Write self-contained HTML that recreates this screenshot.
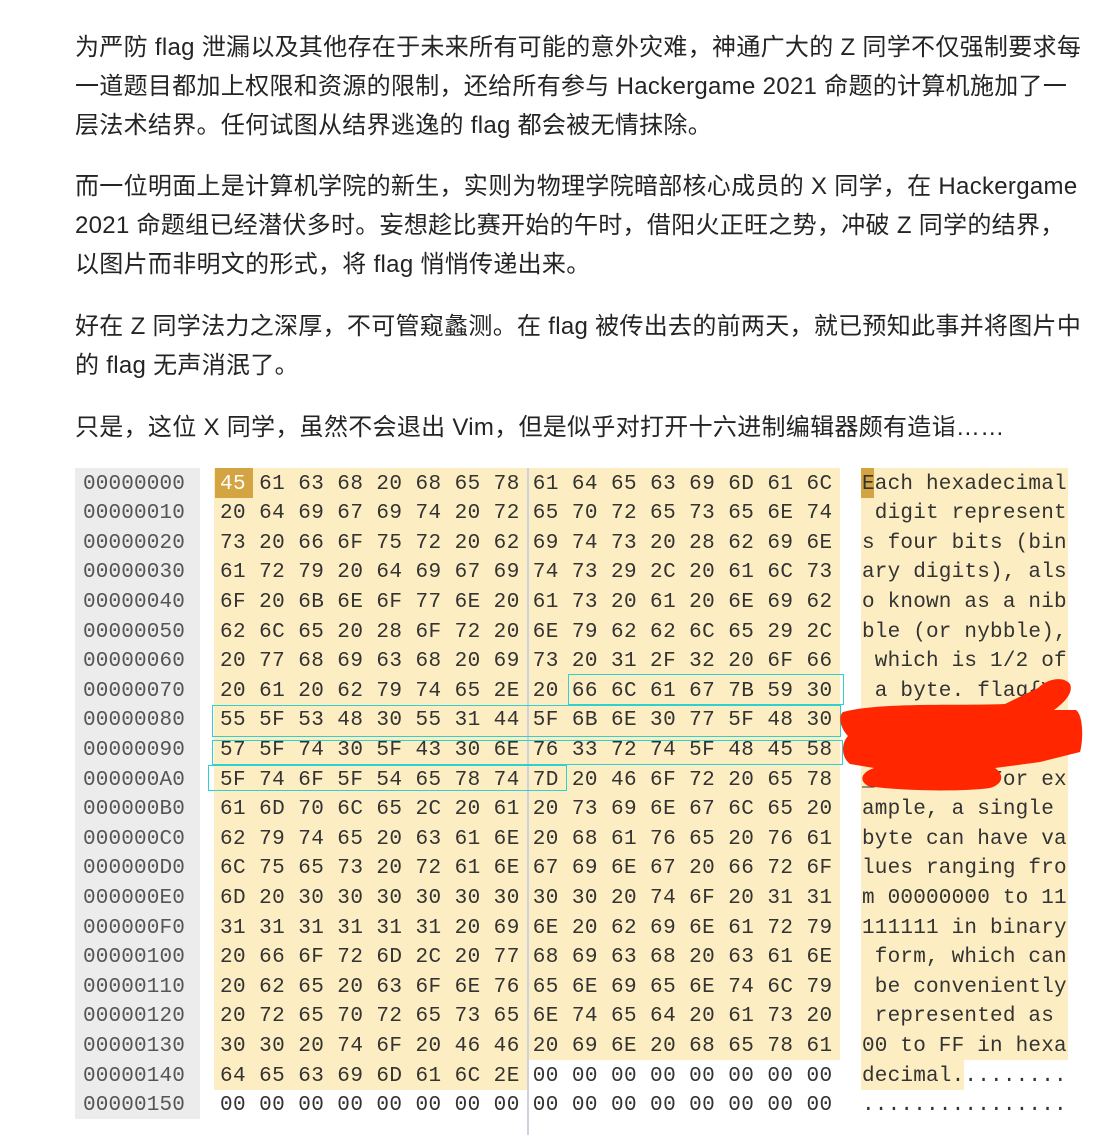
<!DOCTYPE html>
<html><head><meta charset="utf-8"><style>
body{margin:0;width:1108px;height:1135px;background:#fff;position:relative;overflow:hidden}
.p{position:absolute;left:75px;font:24px/39px "Liberation Sans","Noto Sans CJK SC",sans-serif;color:#242424;white-space:nowrap;letter-spacing:.3px}
.bg{position:absolute}
.r{position:absolute;left:0;height:29.6px;line-height:29.6px;font-family:"Liberation Mono",monospace;font-size:21px;white-space:pre;color:#333}
.o{position:absolute;left:83px;letter-spacing:.15px;color:#555}
.h{position:absolute;left:220px;letter-spacing:.43px}
.a{position:absolute;left:862px;letter-spacing:.2px}
.t{position:absolute;border:1.3px solid #2fd0d0}
</style></head><body>
<div class="p" style="top:28px">为严防 flag 泄漏以及其他存在于未来所有可能的意外灾难，神通广大的 Z 同学不仅强制要求每</div>
<div class="p" style="top:67px">一道题目都加上权限和资源的限制，还给所有参与 Hackergame 2021 命题的计算机施加了一</div>
<div class="p" style="top:106px">层法术结界。任何试图从结界逃逸的 flag 都会被无情抹除。</div>
<div class="p" style="top:167px">而一位明面上是计算机学院的新生，实则为物理学院暗部核心成员的 X 同学，在 Hackergame</div>
<div class="p" style="top:206px">2021 命题组已经潜伏多时。妄想趁比赛开始的午时，借阳火正旺之势，冲破 Z 同学的结界，</div>
<div class="p" style="top:245px">以图片而非明文的形式，将 flag 悄悄传递出来。</div>
<div class="p" style="top:307px">好在 Z 同学法力之深厚，不可管窥蠡测。在 flag 被传出去的前两天，就已预知此事并将图片中</div>
<div class="p" style="top:346px">的 flag 无声消泯了。</div>
<div class="p" style="top:408px">只是，这位 X 同学，虽然不会退出 Vim，但是似乎对打开十六进制编辑器颇有造诣……</div>

<div class="bg" style="left:75px;top:468px;width:125px;height:651px;background:#ececec"></div>
<div class="bg" style="left:214px;top:468px;width:626px;height:592px;background:#fdedc2"></div>
<div class="bg" style="left:214px;top:1060px;width:313px;height:29.6px;background:#fdedc2"></div>
<div class="bg" style="left:861px;top:468px;width:207px;height:592px;background:#fdedc2"></div>
<div class="bg" style="left:861px;top:1060px;width:103px;height:29.6px;background:#fdedc2"></div>
<div class="bg" style="left:215px;top:468px;width:38px;height:29.6px;background:#d3a441"></div>
<div class="bg" style="left:861px;top:468px;width:13px;height:29.6px;background:#d3a441"></div>
<div class="bg" style="left:527px;top:468px;width:1.5px;height:667px;background:#cdd3de"></div>

<div style="position:absolute;left:0;top:1.5px;width:1108px">
<div class="r" style="top:468px"><span class="o">00000000</span><span class="h"><span style="color:#fff">45</span> 61 63 68 20 68 65 78 61 64 65 63 69 6D 61 6C</span><span class="a">Each hexadecimal</span></div>
<div class="r" style="top:497.6px"><span class="o">00000010</span><span class="h">20 64 69 67 69 74 20 72 65 70 72 65 73 65 6E 74</span><span class="a"> digit represent</span></div>
<div class="r" style="top:527.2px"><span class="o">00000020</span><span class="h">73 20 66 6F 75 72 20 62 69 74 73 20 28 62 69 6E</span><span class="a">s four bits (bin</span></div>
<div class="r" style="top:556.8px"><span class="o">00000030</span><span class="h">61 72 79 20 64 69 67 69 74 73 29 2C 20 61 6C 73</span><span class="a">ary digits), als</span></div>
<div class="r" style="top:586.4px"><span class="o">00000040</span><span class="h">6F 20 6B 6E 6F 77 6E 20 61 73 20 61 20 6E 69 62</span><span class="a">o known as a nib</span></div>
<div class="r" style="top:616px"><span class="o">00000050</span><span class="h">62 6C 65 20 28 6F 72 20 6E 79 62 62 6C 65 29 2C</span><span class="a">ble (or nybble),</span></div>
<div class="r" style="top:645.6px"><span class="o">00000060</span><span class="h">20 77 68 69 63 68 20 69 73 20 31 2F 32 20 6F 66</span><span class="a"> which is 1/2 of</span></div>
<div class="r" style="top:675.2px"><span class="o">00000070</span><span class="h">20 61 20 62 79 74 65 2E 20 66 6C 61 67 7B 59 30</span><span class="a"> a byte. flag{Y0</span></div>
<div class="r" style="top:704.8px"><span class="o">00000080</span><span class="h">55 5F 53 48 30 55 31 44 5F 6B 6E 30 77 5F 48 30</span><span class="a">U_SH0U1D_kn0w_H0</span></div>
<div class="r" style="top:734.4px"><span class="o">00000090</span><span class="h">57 5F 74 30 5F 43 30 6E 76 33 72 74 5F 48 45 58</span><span class="a">W_t0_C0nv3rt_HEX</span></div>
<div class="r" style="top:764px"><span class="o">000000A0</span><span class="h">5F 74 6F 5F 54 65 78 74 7D 20 46 6F 72 20 65 78</span><span class="a">_to_Text} For ex</span></div>
<div class="r" style="top:793.6px"><span class="o">000000B0</span><span class="h">61 6D 70 6C 65 2C 20 61 20 73 69 6E 67 6C 65 20</span><span class="a">ample, a single </span></div>
<div class="r" style="top:823.2px"><span class="o">000000C0</span><span class="h">62 79 74 65 20 63 61 6E 20 68 61 76 65 20 76 61</span><span class="a">byte can have va</span></div>
<div class="r" style="top:852.8px"><span class="o">000000D0</span><span class="h">6C 75 65 73 20 72 61 6E 67 69 6E 67 20 66 72 6F</span><span class="a">lues ranging fro</span></div>
<div class="r" style="top:882.4px"><span class="o">000000E0</span><span class="h">6D 20 30 30 30 30 30 30 30 30 20 74 6F 20 31 31</span><span class="a">m 00000000 to 11</span></div>
<div class="r" style="top:912px"><span class="o">000000F0</span><span class="h">31 31 31 31 31 31 20 69 6E 20 62 69 6E 61 72 79</span><span class="a">111111 in binary</span></div>
<div class="r" style="top:941.6px"><span class="o">00000100</span><span class="h">20 66 6F 72 6D 2C 20 77 68 69 63 68 20 63 61 6E</span><span class="a"> form, which can</span></div>
<div class="r" style="top:971.2px"><span class="o">00000110</span><span class="h">20 62 65 20 63 6F 6E 76 65 6E 69 65 6E 74 6C 79</span><span class="a"> be conveniently</span></div>
<div class="r" style="top:1000.8px"><span class="o">00000120</span><span class="h">20 72 65 70 72 65 73 65 6E 74 65 64 20 61 73 20</span><span class="a"> represented as </span></div>
<div class="r" style="top:1030.4px"><span class="o">00000130</span><span class="h">30 30 20 74 6F 20 46 46 20 69 6E 20 68 65 78 61</span><span class="a">00 to FF in hexa</span></div>
<div class="r" style="top:1060px"><span class="o">00000140</span><span class="h">64 65 63 69 6D 61 6C 2E 00 00 00 00 00 00 00 00</span><span class="a">decimal.........</span></div>
<div class="r" style="top:1089.6px"><span class="o">00000150</span><span class="h">00 00 00 00 00 00 00 00 00 00 00 00 00 00 00 00</span><span class="a">................</span></div>
</div>

<div class="t" style="left:568px;top:674px;width:274px;height:29px"></div>
<div class="t" style="left:212px;top:705px;width:627px;height:30px"></div>
<div class="t" style="left:212px;top:740px;width:629px;height:23px"></div>
<div class="t" style="left:208px;top:765px;width:357px;height:24px"></div>

<svg style="position:absolute;left:0;top:0" width="1108" height="1135">
<path fill="#ff2600" d="M843 712 C880 702 960 706 1005 704 L1038 688 C1048 678 1064 676 1070 684 C1074 694 1062 704 1054 710 L1076 710 C1084 716 1083 742 1080 752 L1040 762 L995 768 C1004 774 1004 784 990 788 C960 792 900 791 868 786 C858 780 862 772 874 768 L850 764 C840 756 842 742 848 736 C840 728 838 716 843 712 Z"/>
</svg>
</body></html>
